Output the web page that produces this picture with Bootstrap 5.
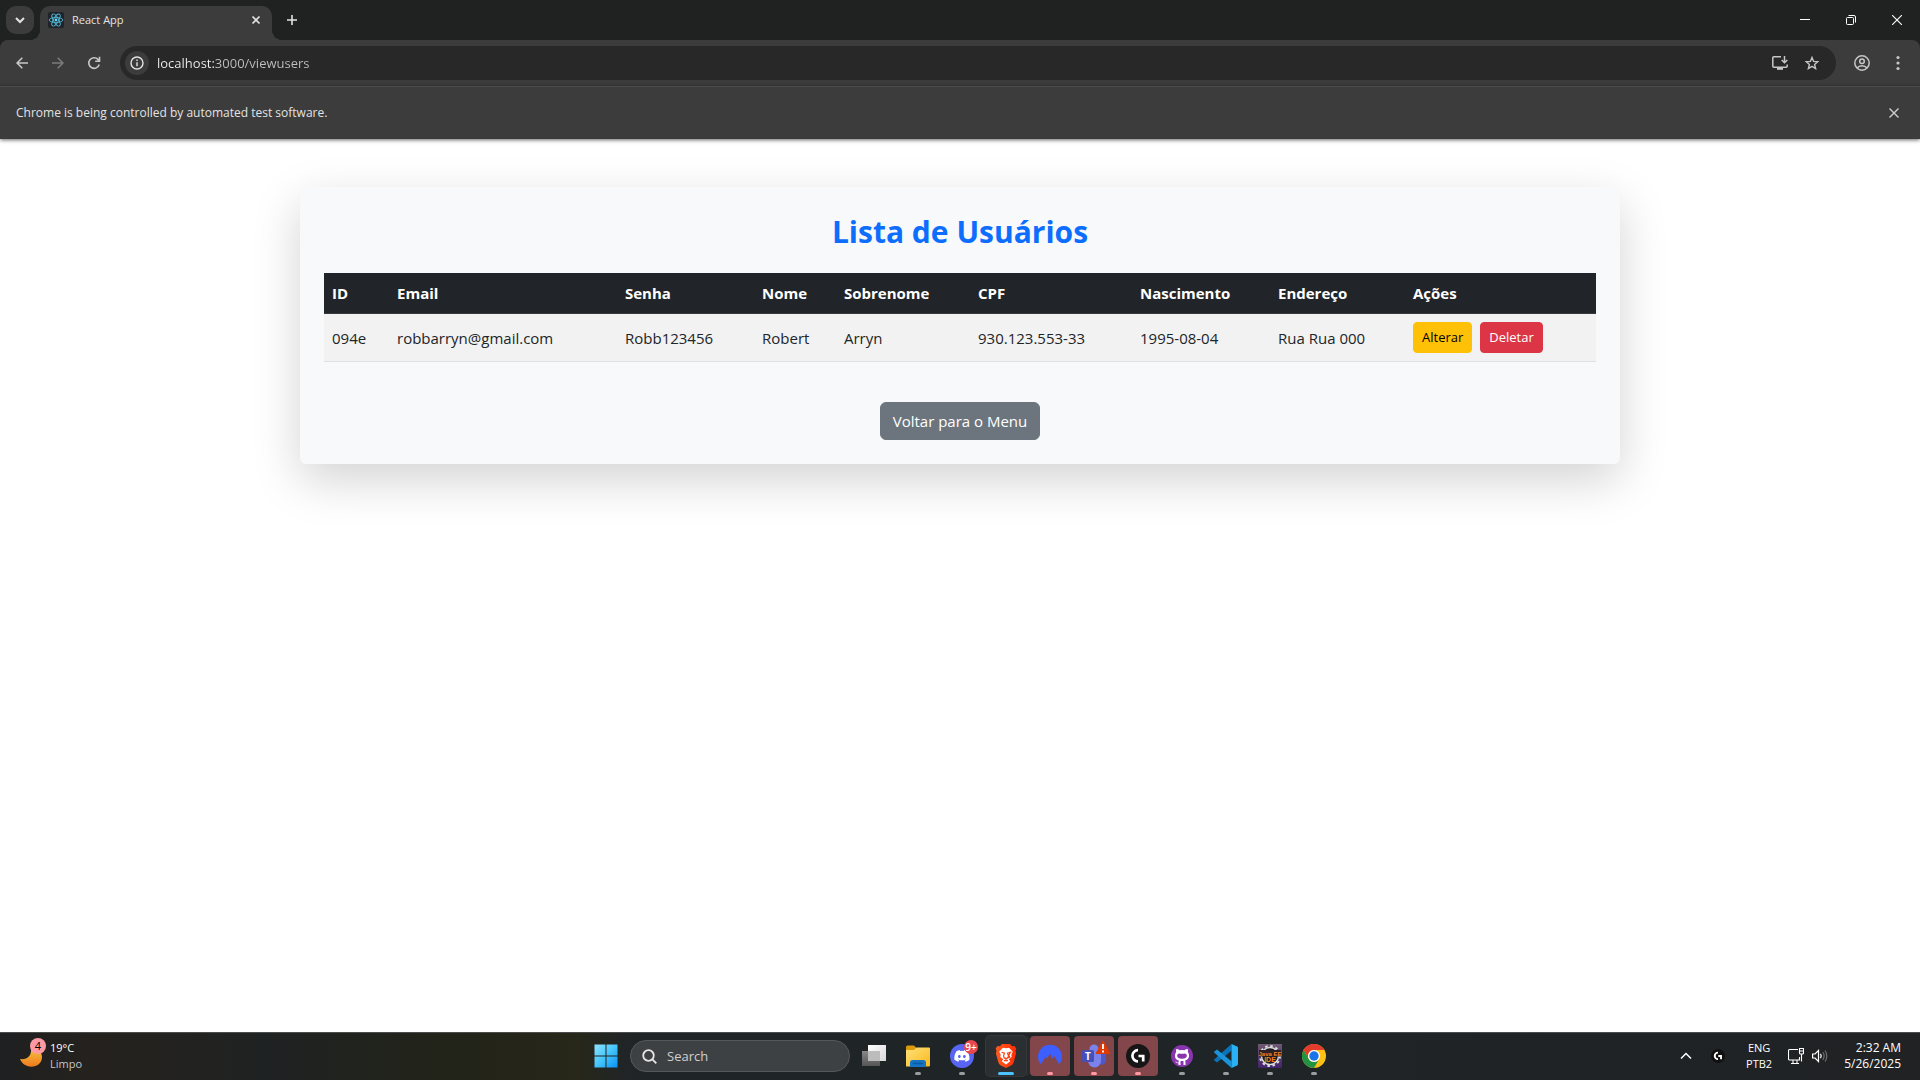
<!DOCTYPE html>
<html lang="pt-BR">
<head>
<meta charset="utf-8">
<meta name="viewport" content="width=device-width, initial-scale=1">
<title>React App</title>
<link href="https://cdn.jsdelivr.net/npm/bootstrap@5.3.0/dist/css/bootstrap.min.css" rel="stylesheet">
<style>
  body { font-family: "Segoe UI", "Open Sans", "Noto Sans", sans-serif; background: #fff; overflow: hidden; }
  svg { display: block; flex: none; }
  .ui-btn { border: 0; padding: 0; background: none; color: inherit; display: flex; align-items: center; justify-content: center; flex: none; }

  /* browser frame */
  .tabstrip { height: 40px; background: #202222; color: #e3e3e3; padding-left: 6px; }
  .tab-search { width: 28px; height: 28px; border-radius: 10px; background: #3c3c3c; }
  .tab-item { position: relative; width: 232px; height: 34px; margin: 6px 0 0 6px; padding: 0 8px; background: #3c3c3c; border-radius: 10px 10px 0 0; font-size: 11px; line-height: 28px; }
  .tab-item::before, .tab-item::after { content: ""; position: absolute; bottom: 0; width: 10px; height: 10px; }
  .tab-item::before { right: 100%; background: radial-gradient(circle at 0 0, transparent 10px, #3c3c3c 10px); }
  .tab-item::after { left: 100%; background: radial-gradient(circle at 100% 0, transparent 10px, #3c3c3c 10px); }
  .tab-inner { height: 28px; }
  .new-tab { width: 28px; height: 28px; margin-left: 6px; }
  .win-btn { width: 46px; height: 40px; color: #fff; }
  .strip-under { background: #202222; }
  .toolbar { height: 46px; background: #3c3c3c; color: #c7c7c7; border-radius: 8px 8px 0 0; padding: 0 4px; }
  .tool-btn { width: 36px; height: 34px; }
  .omnibox { height: 34px; border-radius: 17px; background: #282828; margin: 0 8px; padding: 0 8px 0 5px; }
  .site-info { width: 24px; height: 24px; border-radius: 50%; background: #3c3c3c; color: #e3e3e3; }
  .url-field { border: 0; outline: 0; padding: 0; margin-left: 8px; font-size: 13px; line-height: 20px; color: transparent;
    background: linear-gradient(90deg, #f1f1f1 58px, #c0c0c0 58px); -webkit-background-clip: text; background-clip: text; }
  .omni-btn { width: 32px; height: 32px; }
  .infobar { height: 53px; background: #3c3c3c; color: #e3e3e3; border-top: 1px solid #4a4a4a; padding: 0 16px; font-size: 12px; box-shadow: 0 1px 4px rgba(0,0,0,.6); position: relative; }

  /* page */
  .users-card { box-shadow: 0 16px 48px rgba(0,0,0,.175); border-radius: 6px; background: #f8f9fa; }
  .users-title { font-size: 30px; line-height: 42px; margin-bottom: 20px; }
  .users-table { font-size: 15px; line-height: 24px; }
  .users-table > tbody { --bs-table-bg: #fff; }
  .users-table > tbody > tr > td { color: #000; background: #f2f2f2; box-shadow: none; border-bottom-color: #dee2e6; }
  .w-id { width: 65px; } .w-email { width: 228px; } .w-senha { width: 137px; } .w-nome { width: 82px; } .w-sobre { width: 134px; }
  .w-cpf { width: 162px; } .w-nasc { width: 138px; } .w-end { width: 135px; } .w-acoes { width: 191px; }
  .users-table .btn { font-size: 13px; line-height: 21px; }
  .back-btn { font-size: 15px; line-height: 24px; }

  /* taskbar */
  .taskbar { height: 48px; box-shadow: inset 0 1px 0 #4b4c4c; color: #fff; font-size: 11px; line-height: 16px;
    background: linear-gradient(90deg, #1f2021 0, #25221e 5%, #1f2222 14%, #222319 23%, #27271a 30%, #1f2427 33%, #1f2427 66%, #202224 100%); }
  .side { flex: 1 1 0; }
  .weather { padding-left: 18px; gap: 4px; }
  .weather-sub { color: #c5c5c5; }
  .tasks { gap: 4px; }
  .task-btn { position: relative; width: 40px; height: 40px; border-radius: 4px; }
  .task-btn.running::after { content: ""; position: absolute; left: 17px; bottom: 1px; width: 6px; height: 3px; border-radius: 2px; background: #9a9c9d; }
  .task-btn.active { background: #2b2f31; box-shadow: 0 0 0 1px #34383a, 4px 0 0 0 #272b2d; }
  .task-btn.active::after { left: 12px; width: 16px; background: #4cc2ff; }
  .task-btn.alerting { background: #82464b; }
  .task-btn.alerting::after { background: #ff99a4; }
  .search-pill { width: 220px; height: 32px; border-radius: 16px; background: #3e4143; border: 1px solid #55585a; padding-left: 11px; gap: 10px; }
  .search-pill input { background: none; border: 0; outline: 0; padding: 0; width: 150px; font-size: 13px; line-height: 20px; color: #fff; }
  .search-pill input::placeholder { color: #cfcfcf; opacity: 1; }
  .tray-btn { width: 32px; height: 40px; }
  .tray-text { padding: 0 12px; }
  .clock { padding: 0 19px 0 12px; font-size: 12px; }
</style>
</head>
<body class="d-flex flex-column vh-100">

<header class="flex-shrink-0">
  <div class="tabstrip d-flex align-items-start">
    <button class="ui-btn tab-search mt-1 align-self-center mb-1" aria-label="Search tabs">
      <svg width="10" height="10" viewBox="0 0 10 10" fill="none" stroke="currentColor" stroke-width="2"><path d="M1 3l4 4 4-4"/></svg>
    </button>
    <div class="tab-item">
      <div class="tab-inner d-flex align-items-center gap-2">
        <svg width="16" height="16" viewBox="0 0 16 16"><rect width="16" height="16" rx="2" fill="#20232a"/><g fill="none" stroke="#4fb8d3" stroke-width=".9"><ellipse cx="8" cy="8" rx="6.8" ry="2.6"/><ellipse cx="8" cy="8" rx="6.8" ry="2.6" transform="rotate(60 8 8)"/><ellipse cx="8" cy="8" rx="6.8" ry="2.6" transform="rotate(120 8 8)"/></g><circle cx="8" cy="8" r="1.4" fill="#61dafb"/></svg>
        <span>React App</span>
        <button class="ui-btn ms-auto" aria-label="Close tab">
          <svg width="16" height="16" viewBox="0 0 16 16" stroke="currentColor" stroke-width="1.7"><path d="M4.500 4.500l7 7m0-7l-7 7"/></svg>
        </button>
      </div>
    </div>
    <button class="ui-btn new-tab align-self-center" aria-label="New tab">
      <svg width="12" height="12" viewBox="0 0 12 12" stroke="currentColor" stroke-width="1.600"><path d="M6 1v10M1 6h10"/></svg>
    </button>
    <div class="d-flex ms-auto">
      <button class="ui-btn win-btn" aria-label="Minimize"><svg width="10" height="10" viewBox="0 0 10 10" stroke="currentColor"><path d="M0 4.500h10"/></svg></button>
      <button class="ui-btn win-btn" aria-label="Restore"><svg width="10" height="10" viewBox="0 0 10 10" fill="none" stroke="currentColor"><rect x=".5" y="2.500" width="7" height="7" rx="1"/><path d="M2.500 .5H8a1.500 1.500 0 0 1 1.500 1.500v5.500"/></svg></button>
      <button class="ui-btn win-btn" aria-label="Close"><svg width="10" height="10" viewBox="0 0 10 10" stroke="currentColor" stroke-width="1.100"><path d="M0 0l10 10M10 0L0 10"/></svg></button>
    </div>
  </div>

  <div class="strip-under">
    <div class="toolbar d-flex align-items-center">
      <button class="ui-btn tool-btn" aria-label="Back"><svg width="12" height="12" viewBox="0 0 12 12" fill="none" stroke="currentColor" stroke-width="1.600"><path d="M12 6H1.200M6.300 .8L1.100 6l5.200 5.200"/></svg></button>
      <button class="ui-btn tool-btn" aria-label="Forward" disabled><svg width="12" height="12" viewBox="0 0 12 12" fill="none" stroke="#7b7b7b" stroke-width="1.600"><path d="M0 6h10.800M5.700 .8L10.900 6l-5.200 5.200"/></svg></button>
      <button class="ui-btn tool-btn" aria-label="Reload"><svg width="14" height="14" viewBox="0 0 14 14" fill="none" stroke="currentColor" stroke-width="1.600"><path d="M12.200 8.500A5.300 5.300 0 1 1 11 3.400l1.300 1.300M12.500 .8v4.400H8.200"/></svg></button>
      <div class="omnibox d-flex align-items-center flex-grow-1">
        <button class="ui-btn site-info" aria-label="View site information"><svg width="14" height="14" viewBox="0 0 14 14" fill="none" stroke="currentColor" stroke-width="1.400"><circle cx="7" cy="7" r="6"/><path d="M7 6.200v4M7 3.600v1.500"/></svg></button>
        <input class="url-field flex-grow-1" type="text" aria-label="Address bar" value="localhost:3000/viewusers">
        <button class="ui-btn omni-btn" aria-label="Install app"><svg width="16" height="14" viewBox="0 0 16 14" fill="none" stroke="currentColor" stroke-width="1.500"><path d="M9 .8H1.800a1 1 0 0 0-1 1v8.400a1 1 0 0 0 1 1h12.400a1 1 0 0 0 1-1V8.500M12.500 0v6.500M9.700 4l2.800 2.800L15.300 4"/><path d="M5 12.600h6" stroke-width="2.400"/></svg></button>
        <button class="ui-btn omni-btn" aria-label="Bookmark this tab"><svg width="14" height="14" viewBox="0 0 14 14" fill="none" stroke="currentColor" stroke-width="1.400"><path d="M7 1.500l1.600 3.900 4.200.3-3.200 2.700 1 4.100L7 10.300l-3.600 2.200 1-4.100L1.200 5.700l4.200-.3z"/></svg></button>
      </div>
      <button class="ui-btn tool-btn" aria-label="Profile"><svg width="16" height="16" viewBox="0 0 16 16" fill="none" stroke="currentColor" stroke-width="1.500"><circle cx="8" cy="8" r="7.200"/><circle cx="8" cy="6.300" r="2.300"/><path d="M3 13c2.500-3 7.500-3 10 0"/></svg></button>
      <button class="ui-btn tool-btn" aria-label="Menu"><svg width="4" height="16" viewBox="0 0 4 16" fill="currentColor"><circle cx="2" cy="2.500" r="1.600"/><circle cx="2" cy="8" r="1.600"/><circle cx="2" cy="13.500" r="1.600"/></svg></button>
    </div>
  </div>

  <div class="infobar d-flex align-items-center justify-content-between">
    <span>Chrome is being controlled by automated test software.</span>
    <button class="ui-btn" aria-label="Dismiss"><svg width="20" height="20" viewBox="0 0 20 20" stroke="#d0d0d0" stroke-width="1.400"><path d="M5.500 5.500l9 9m0-9l-9 9"/></svg></button>
  </div>
</header>

<main class="flex-grow-1">
  <div class="container users-card mt-5 p-4">
    <h2 class="users-title text-center text-primary fw-bold">Lista de Usuários</h2>
    <table class="table table-striped align-middle users-table mb-3">
      <thead class="table-dark">
        <tr>
          <th class="w-id" scope="col">ID</th>
          <th class="w-email" scope="col">Email</th>
          <th class="w-senha" scope="col">Senha</th>
          <th class="w-nome" scope="col">Nome</th>
          <th class="w-sobre" scope="col">Sobrenome</th>
          <th class="w-cpf" scope="col">CPF</th>
          <th class="w-nasc" scope="col">Nascimento</th>
          <th class="w-end" scope="col">Endereço</th>
          <th class="w-acoes" scope="col">Ações</th>
        </tr>
      </thead>
      <tbody>
        <tr>
          <td>094e</td>
          <td>robbarryn@gmail.com</td>
          <td>Robb123456</td>
          <td>Robert</td>
          <td>Arryn</td>
          <td>930.123.553-33</td>
          <td>1995-08-04</td>
          <td>Rua Rua 000</td>
          <td><div class="d-flex gap-2"><button class="btn btn-warning btn-sm">Alterar</button><button class="btn btn-danger btn-sm">Deletar</button></div></td>
        </tr>
      </tbody>
    </table>
    <div class="text-center pt-4">
      <button class="btn btn-secondary back-btn">Voltar para o Menu</button>
    </div>
  </div>
</main>

<footer class="taskbar d-flex align-items-center flex-shrink-0">
  <div class="side">
    <div class="weather d-flex align-items-center">
      <svg width="28" height="32" viewBox="0 0 28 32" overflow="visible"><defs><linearGradient id="moon" x1="0" y1="0" x2="0" y2="1"><stop offset="0" stop-color="#f5c542"/><stop offset="1" stop-color="#f07a1c"/></linearGradient></defs><path d="M2 19c7 1 12-3 11-11 7 0 11 4 11 9 0 12-18 13-22 2z" fill="url(#moon)"/><circle cx="20" cy="6" r="8" fill="#ff99a4"/><text x="20" y="10" text-anchor="middle" font-size="11" fill="#000">4</text></svg>
      <div class="d-flex flex-column"><span>19°C</span><span class="weather-sub">Limpo</span></div>
    </div>
  </div>

  <nav class="tasks d-flex align-items-center" aria-label="Taskbar">
    <button class="ui-btn task-btn" aria-label="Start"><svg width="24" height="24" viewBox="0 0 24 24"><defs><linearGradient id="win" x1="0" y1="0" x2="1" y2="1"><stop offset="0" stop-color="#8fe3ff"/><stop offset=".5" stop-color="#45c5fb"/><stop offset="1" stop-color="#0a90f5"/></linearGradient></defs><path d="M.5 .5h11v11H.5zM12.500 .5h11v11h-11zM.5 12.500h11v11H.5zM12.500 12.500h11v11h-11z" fill="url(#win)"/></svg></button>
    <label class="search-pill d-flex align-items-center">
      <svg width="15" height="15" viewBox="0 0 15 15" fill="none" stroke="#e6e6e6" stroke-width="1.800"><circle cx="6.500" cy="6.500" r="5.300"/><path d="M10.400 10.400l3.900 3.900"/></svg>
      <input type="search" placeholder="Search" aria-label="Search">
    </label>
    <button class="ui-btn task-btn" aria-label="Task view"><svg width="24" height="24" viewBox="0 0 24 24"><defs><linearGradient id="tvA" x1="0" y1="0" x2="0" y2="1"><stop offset="0" stop-color="#888"/><stop offset="1" stop-color="#555"/></linearGradient><linearGradient id="tvB" x1="0" y1="0" x2="1" y2="1"><stop offset="0" stop-color="#fff"/><stop offset="1" stop-color="#d8d8d8"/></linearGradient></defs><path d="M0 7h18v15H0z" fill="url(#tvA)"/><path d="M6 1h18v16H6z" fill="url(#tvB)"/><path d="M6 7h12v10H6z" fill="#bcbcbc"/></svg></button>
    <button class="ui-btn task-btn running" aria-label="File Explorer"><svg width="24" height="24" viewBox="0 0 24 24"><defs><linearGradient id="fld" x1="0" y1="0" x2="1" y2="1"><stop offset="0" stop-color="#ffe07a"/><stop offset="1" stop-color="#f9b91d"/></linearGradient></defs><path d="M0 3a1.500 1.500 0 0 1 1.500-1.500H8L10.500 4v3H0z" fill="#dd9a08"/><path d="M0 6h8l2.500-2.500H23a1 1 0 0 1 1 1v17a1 1 0 0 1-1 1H0z" fill="url(#fld)"/><path d="M4 23v-4.500a2.500 2.500 0 0 1 2.500-2.500h11a2.500 2.500 0 0 1 2.500 2.500V23z" fill="#1475c4"/><path d="M7.500 19.500h9" stroke="#0b5a9e" stroke-width="1.300" stroke-linecap="round"/></svg></button>
    <button class="ui-btn task-btn running" aria-label="Discord"><svg width="32" height="32" viewBox="0 0 32 32" overflow="visible"><circle cx="16" cy="16" r="12" fill="#5865f2"/><path transform="translate(8.300 8.300) scale(.95)" fill="#fff" d="M13.545 2.907a13.200 13.200 0 0 0-3.257-1.011.05.05 0 0 0-.052.025c-.141.25-.297.577-.406.833a12.200 12.200 0 0 0-3.658 0 8 8 0 0 0-.412-.833.05.05 0 0 0-.052-.025c-1.125.194-2.220.534-3.257 1.011a.04.04 0 0 0-.021.018C.356 6.024-.213 9.047.066 12.032q.003.022.021.037a13.300 13.300 0 0 0 3.995 2.020.05.05 0 0 0 .056-.019q.463-.63.818-1.329a.05.05 0 0 0-.01-.059l-.018-.011a9 9 0 0 1-1.248-.595.05.05 0 0 1-.02-.066l.015-.019q.127-.095.248-.195a.05.05 0 0 1 .051-.007c2.619 1.196 5.454 1.196 8.041 0a.05.05 0 0 1 .053.007q.121.1.248.195a.05.05 0 0 1-.004.085 8 8 0 0 1-1.249.594.05.05 0 0 0-.03.03.05.05 0 0 0 .003.041c.24.465.515.909.817 1.329a.05.05 0 0 0 .056.019 13.200 13.200 0 0 0 4.001-2.020.05.05 0 0 0 .021-.037c.334-3.451-.559-6.449-2.366-9.106a.03.03 0 0 0-.02-.019m-8.198 7.307c-.789 0-1.438-.724-1.438-1.612s.637-1.613 1.438-1.613c.807 0 1.450.73 1.438 1.613 0 .888-.637 1.612-1.438 1.612m5.316 0c-.788 0-1.438-.724-1.438-1.612s.637-1.613 1.438-1.613c.807 0 1.451.73 1.438 1.613 0 .888-.631 1.612-1.438 1.612"/><circle cx="25" cy="7" r="7" fill="#e8474e"/><text x="25" y="11" text-anchor="middle" font-size="10" font-weight="600" fill="#fff">9+</text></svg></button>
    <button class="ui-btn task-btn running active" aria-label="Brave"><svg width="24" height="24" viewBox="0 0 24 24"><defs><linearGradient id="brv" x1="0" x2="1"><stop offset="0" stop-color="#ff5a1f"/><stop offset="1" stop-color="#ff2b05"/></linearGradient></defs><path d="M8 0h8l2 2.300 2.500-.3 1.800 2.600-.8 2.400.6 2.200-2.500 9.300q-.6 1.700-2 2.700L12 24l-5.600-2.800q-1.400-1-2-2.700L1.900 9.200 2.500 7l-.8-2.400L3.500 2l2.500.3z" fill="url(#brv)"/><path d="M12 4.300l3-.6 3.800 4-1.500 3 .4 2.400-3 2.200 1.600 1.900-4.300 3.200-4.300-3.200 1.600-1.900-3-2.200.4-2.400-1.500-3L9 3.700z" fill="#fff"/><path d="M7.500 8.300l3 .9-1 2.700.8 2 1.700.6 1.700-.6.8-2-1-2.700 3-.9-1.700 3 1 1.800-1.900.7M12 14.500v3M10 17l2-1.300 2 1.300" fill="none" stroke="#f9400f" stroke-width="1.200"/></svg></button>
    <button class="ui-btn task-btn running alerting" aria-label="NordVPN"><svg width="24" height="24" viewBox="0 0 24 24"><path d="M2.800 20.500A12 12 0 1 1 21.200 20.500L16.200 11.800l-1.600 2.700.6 1.600L11.800 9.500 8.600 16l.4-1.800-1.200-1.700z" fill="#3e5fff"/></svg></button>
    <button class="ui-btn task-btn running alerting" aria-label="Microsoft Teams"><svg width="32" height="32" viewBox="0 0 32 32" overflow="visible"><circle cx="16" cy="9" r="4.500" fill="#7b83eb"/><circle cx="24" cy="11" r="3" fill="#5059c9"/><path d="M20 13h8v8a4.500 4.500 0 0 1-8 2z" fill="#5059c9"/><path d="M10 13h13v8a6.500 6.500 0 0 1-13 0z" fill="#7b83eb"/><rect x="4" y="10" width="12" height="12" rx="1.500" fill="#464eb8"/><text x="10" y="20" text-anchor="middle" font-size="10" font-weight="700" fill="#fff">T</text><path d="M25 1l7 12.500H18z" fill="#dc3a06" stroke="#dc3a06" stroke-width="1" stroke-linejoin="round"/><path d="M25 4v5M25 10.500v2" stroke="#fff" stroke-width="1.800"/></svg></button>
    <button class="ui-btn task-btn running alerting" aria-label="Logitech G HUB"><svg width="24" height="24" viewBox="0 0 24 24"><circle cx="12" cy="12" r="12" fill="#161616"/><path d="M12 6.200A5.600 5.600 0 1 0 12 17.400M12.500 12h4.700v5.500" fill="none" stroke="#fff" stroke-width="2.700"/></svg></button>
    <button class="ui-btn task-btn running" aria-label="GitHub Desktop"><svg width="24" height="24" viewBox="0 0 24 24"><circle cx="12" cy="12" r="11" fill="#8a35b0"/><path d="M6.300 5q1.700.1 3.400 1.300 2.300-.5 4.600 0Q16 5.100 17.700 5q.6 1.600.1 3.100 1.700 1.900 1.200 4.400-.6 3.200-4 3.900.5.700.5 2V21h-7v-1.800q-2.300.3-3.300-1.900.9 0 1.600.9.700.7 1.700.3.100-1.300.5-1.900-3.400-.7-4-3.900-.5-2.500 1.200-4.600-.5-1.500.1-3.100z" fill="#fff"/><path d="M9 9.500q3 .4 6 0 2 .3 1.900 2.300-.3 3-4.900 3t-4.900-3Q7 9.800 9 9.500zM10.500 17h3v4.500h-3z" fill="#8a35b0"/></svg></button>
    <button class="ui-btn task-btn running" aria-label="Visual Studio Code"><svg width="24" height="24" viewBox="0 0 24 24"><path d="M17.500 0v6.800L3 18.500.4 16.600q-.7-.7 0-1.400z" fill="#0b72b8"/><path d="M17.500 24v-6.800L3 5.500.4 7.400q-.7.700 0 1.400z" fill="#1a93d8"/><path d="M17.500 0L23.200 2.600q.8.400.8 1.300v16.200q0 .9-.8 1.300L17.500 24z" fill="#29b1f2"/></svg></button>
    <button class="ui-btn task-btn running" aria-label="Eclipse Java EE IDE"><svg width="24" height="24" viewBox="0 0 24 24"><defs><linearGradient id="ecl" x1="0" y1="0" x2="0" y2="1"><stop offset="0" stop-color="#6f5a70"/><stop offset="1" stop-color="#43226d"/></linearGradient></defs><rect width="24" height="24" fill="url(#ecl)"/><circle cx="12" cy="12" r="8.500" fill="#1c1a20" stroke="#ddd" stroke-width="1.400"/><circle cx="12" cy="12" r="10" fill="none" stroke="#ddd" stroke-width="2" stroke-dasharray="2.500 2.740"/><path d="M1 6h22v6.500H1z" fill="#2a2026"/><g font-family="Liberation Sans, sans-serif" font-weight="700" fill="#f58220" text-anchor="middle"><text x="12" y="11.500" font-size="6">Java EE</text><text x="12" y="18" font-size="7">IDE</text></g></svg></button>
    <button class="ui-btn task-btn running" aria-label="Chrome"><svg width="24" height="24" viewBox="0 0 24 24"><circle cx="12" cy="12" r="12" fill="#fbc116"/><path d="M1.600 6A12 12 0 0 1 22.400 6H12a6 6 0 0 0-5.200 9z" fill="#e33b2e"/><path d="M1.600 6A12 12 0 0 0 12 24l5.200-9A6 6 0 0 1 6.800 15z" fill="#229342"/><circle cx="12" cy="12" r="6" fill="#fff"/><circle cx="12" cy="12" r="4.700" fill="#1a73e8"/></svg></button>
  </nav>

  <div class="side d-flex align-items-center justify-content-end">
    <button class="ui-btn tray-btn" aria-label="Show hidden icons"><svg width="12" height="8" viewBox="0 0 12 8" fill="none" stroke="#fff" stroke-width="1.500"><path d="M1 6.500l5-5 5 5"/></svg></button>
    <button class="ui-btn tray-btn" aria-label="G HUB"><svg width="14" height="14" viewBox="0 0 24 24"><circle cx="12" cy="12" r="12" fill="#111"/><path d="M12 6.200A5.600 5.600 0 1 0 12 17.400M12.500 12h4.700v5.500" fill="none" stroke="#fff" stroke-width="3.200"/></svg></button>
    <div class="tray-text text-center d-flex flex-column"><span>ENG</span><span>PTB2</span></div>
    <button class="ui-btn gap-2 px-1" aria-label="Network and volume">
      <svg width="16" height="16" viewBox="0 0 16 16" fill="none" stroke="#fff" stroke-width="1.100"><path d="M10 1.500H1.500a1 1 0 0 0-1 1v8.500a1 1 0 0 0 1 1h10V9M3 15.500h8M5 12v3.500M9 12v3.500M11.500 .5h4v4.500a1 1 0 0 1-1 1h-2a1 1 0 0 1-1-1zM13.500 6v7.500M11.500 3h4"/></svg>
      <svg width="16" height="14" viewBox="0 0 16 14" fill="none" stroke="#fff" stroke-width="1.200"><path d="M.6 5v4H3l3.500 3.500v-11L3 5zM8.500 4.800q1.500 2.200 0 4.400"/><path d="M10.800 3q2.700 4 0 8M13 1.500q3.600 5.500 0 11" stroke="#6c6e70"/></svg>
    </button>
    <div class="clock text-end d-flex flex-column"><span>2:32 AM</span><span>5/26/2025</span></div>
  </div>
</footer>

<script src="https://cdn.jsdelivr.net/npm/bootstrap@5.3.0/dist/js/bootstrap.bundle.min.js"></script>
</body>
</html>
